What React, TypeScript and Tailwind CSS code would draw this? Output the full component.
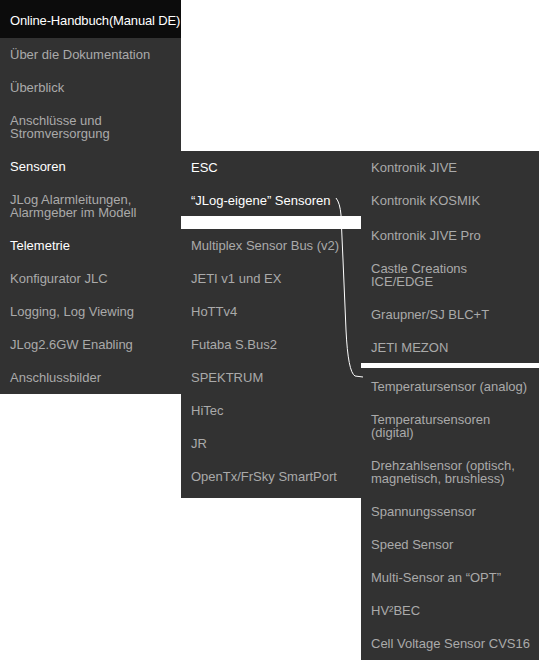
import React from "react";

type Item = { label: string; active?: boolean; h?: string };

// line breaks are kept as in the menu (whitespace-pre)
const mainItems: Item[] = [
  { label: "Über die Dokumentation" },
  { label: "Überblick" },
  { label: "Anschlüsse und\nStromversorgung" },
  { label: "Sensoren", active: true },
  { label: "JLog Alarmleitungen,\nAlarmgeber im Modell" },
  { label: "Telemetrie", active: true },
  { label: "Konfigurator JLC" },
  { label: "Logging, Log Viewing" },
  { label: "JLog2.6GW Enabling" },
  { label: "Anschlussbilder" },
];

const sensorItems: Item[] = [
  { label: "Multiplex Sensor Bus (v2)" },
  { label: "JETI v1 und EX" },
  { label: "HoTTv4" },
  { label: "Futaba S.Bus2" },
  { label: "SPEKTRUM" },
  { label: "HiTec" },
  { label: "JR" },
  { label: "OpenTx/FrSky SmartPort" },
];

const escItems: Item[] = [
  { label: "Kontronik JIVE" },
  { label: "Kontronik KOSMIK", h: "h-[35px]" },
  { label: "Kontronik JIVE Pro" },
  { label: "Castle Creations\nICE/EDGE" },
  { label: "Graupner/SJ BLC+T" },
  { label: "JETI MEZON", h: "h-[32px]" },
];

const ownSensors: Item[] = [
  { label: "Temperatursensor (analog)" },
  { label: "Temperatursensoren\n(digital)" },
  { label: "Drehzahlsensor (optisch,\nmagnetisch, brushless)" },
  { label: "Spannungssensor" },
  { label: "Speed Sensor" },
  { label: "Multi-Sensor an “OPT”" },
  { label: "HV²BEC" },
  { label: "Cell Voltage Sensor CVS16" },
];

const MenuItem = ({ label, active, h }: Item) => (
  <div
    className={`pl-[10px] py-[10px] text-[13px] leading-[13px] whitespace-pre overflow-hidden ${
      h ?? ""
    } ${active ? "text-white" : "text-[#aaaaaa]"}`}
  >
    {label}
  </div>
);

export default function App() {
  return (
    <div
      className="relative w-[539px] h-[660px] overflow-hidden bg-white"
      style={{ fontFamily: '"Liberation Sans", Arial, sans-serif' }}
    >
      <div className="flex items-start">
        {/* main menu */}
        <div className="w-[181px] bg-[#323232]">
          <div className="h-[38px] flex items-center pl-[10px] bg-[#0c0c0c] text-white text-[13px] leading-[13px] tracking-[-0.15px] whitespace-nowrap overflow-hidden pt-[2px]">
            Online-Handbuch(Manual DE)
          </div>
          {mainItems.map((it) => (
            <MenuItem key={it.label} {...it} />
          ))}
        </div>

        {/* Sensoren submenu */}
        <div className="w-[180px] mt-[151px] bg-[#323232] pb-[5px]">
          <MenuItem label="ESC" active />
          <MenuItem label="“JLog-eigene” Sensoren" active h="h-[32px]" />
          <div className="h-[13px] bg-white" />
          {sensorItems.map((it) => (
            <MenuItem key={it.label} {...it} />
          ))}
        </div>

        {/* third level */}
        <div className="flex-1 mt-[151px] bg-[#323232]">
          {escItems.map((it) => (
            <MenuItem key={it.label} {...it} />
          ))}
          <div className="h-[5px] bg-white mb-[2px]" />
          {ownSensors.map((it) => (
            <MenuItem key={it.label} {...it} />
          ))}
        </div>
      </div>

      {/* connector line */}
      <svg
        className="absolute inset-0 pointer-events-none"
        width="539"
        height="660"
        viewBox="0 0 539 660"
      >
        <path
          d="M336 198 Q340 203 341 215 L343 260 L346 330 Q348 372 355 376 L363 377"
          fill="none"
          stroke="#ffffff"
          strokeWidth="1"
        />
      </svg>
    </div>
  );
}
